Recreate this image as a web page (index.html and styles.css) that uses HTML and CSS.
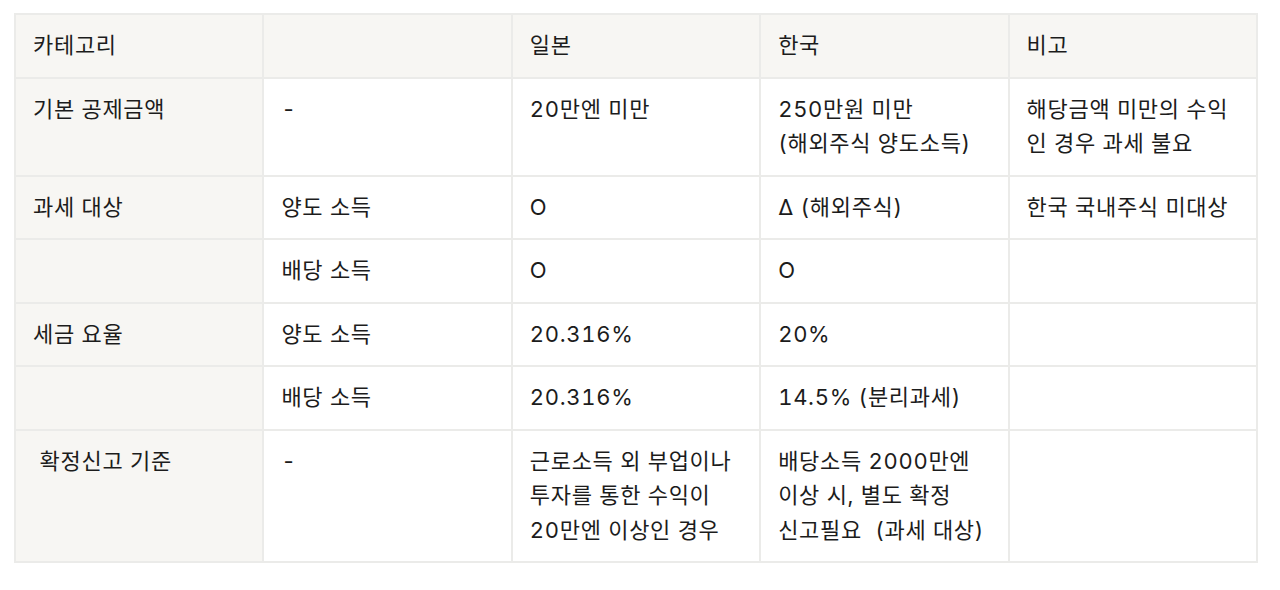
FILE: index.html
```html
<!DOCTYPE html>
<html lang="ko">
<head>
<meta charset="utf-8">
<link rel="stylesheet" href="styles.css">
</head>
<body>
<table class="tax">
  <colgroup>
    <col class="c"><col class="c"><col class="c"><col class="c"><col class="c">
  </colgroup>
  <tr class="head">
    <td class="first">카테고리</td>
    <td></td>
    <td>일본</td>
    <td>한국</td>
    <td>비고</td>
  </tr>
  <tr>
    <td class="first">기본 공제금액</td>
    <td>-</td>
    <td>20만엔 미만</td>
    <td>250만원 미만<br>(해외주식 양도소득)</td>
    <td>해당금액 미만의 수익인 경우 과세 불요</td>
  </tr>
  <tr>
    <td class="first">과세 대상</td>
    <td>양도 소득</td>
    <td>O</td>
    <td>∆ (해외주식)</td>
    <td>한국 국내주식 미대상</td>
  </tr>
  <tr>
    <td class="first"></td>
    <td>배당 소득</td>
    <td>O</td>
    <td>O</td>
    <td></td>
  </tr>
  <tr>
    <td class="first">세금 요율</td>
    <td>양도 소득</td>
    <td>20.316%</td>
    <td>20%</td>
    <td></td>
  </tr>
  <tr>
    <td class="first"></td>
    <td>배당 소득</td>
    <td>20.316%</td>
    <td>14.5% (분리과세)</td>
    <td></td>
  </tr>
  <tr>
    <td class="first">&nbsp;확정신고 기준</td>
    <td>-</td>
    <td class="keep">근로소득 외 부업이나 투자를 통한 수익이 20만엔 이상인 경우</td>
    <td class="keep">배당소득 2000만엔 이상 시, 별도 확정 신고필요&nbsp;&nbsp;(과세 대상)</td>
    <td></td>
  </tr>
</table>
</body>
</html>
```
FILE: styles.css
```css
html, body {
  margin: 0;
  padding: 0;
  background: #ffffff;
}
body {
  padding: 13px 0 0 14px;
  font-family: "Inter", "Noto Sans CJK KR", sans-serif;
  color: #1c1c1c;
}
.tax {
  border-collapse: collapse;
  table-layout: fixed;
  width: 1244px;
  font-size: 22px;
  line-height: 34.5px;
  letter-spacing: 0.7px;
  font-variant-numeric: tabular-nums;
}
.tax .c {
  width: 20%;
}
.tax td {
  border: 2px solid #ebebe9;
  padding: 13px 17px 14px 17px;
  vertical-align: top;
  word-break: normal;
  overflow-wrap: break-word;
}
.tax td.keep {
  word-break: keep-all;
}
.tax .head td,
.tax td.first {
  background: #f7f6f3;
}
```
